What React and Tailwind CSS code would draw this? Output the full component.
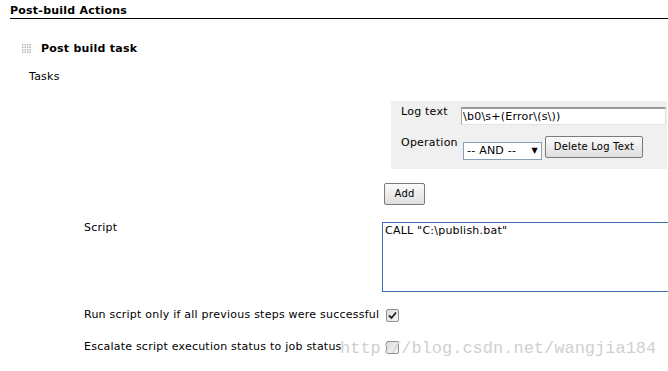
import React from "react";

const GripIcon = () => (
  <svg width="10" height="10" viewBox="0 0 10 10" className="shrink-0">
    {[0, 1, 2, 3].map((r) =>
      [0, 1, 2, 3].map((c) => (
        <rect key={`${r}-${c}`} x={c * 2.5} y={r * 2.5} width="1.5" height="1.5" fill="#b5b5b5" />
      ))
    )}
  </svg>
);

const Checkbox = ({ checked }) => (
  <span className="w-[13px] h-[13px] border border-[#8f8f8f] rounded-[2px] bg-gradient-to-br from-[#dcdcdc] to-[#f6f6f6] flex items-center justify-center shrink-0">
    {checked && (
      <svg width="9" height="9" viewBox="0 0 9 9">
        <path d="M1 4.5 L3.5 7 L8 1.5" stroke="#222" strokeWidth="1.8" fill="none" />
      </svg>
    )}
  </span>
);

const Button = ({ children, className = "" }) => (
  <button
    className={`h-[22px] border border-[#7a7a7a] rounded-[2px] bg-gradient-to-b from-[#fbfbfb] to-[#dedede] text-[10px] text-black leading-none tracking-[0.2px] whitespace-nowrap ${className}`}
  >
    {children}
  </button>
);

export default function App() {
  return (
    <div className="relative w-[668px] h-[371px] bg-white overflow-hidden text-[11px] text-black tracking-[0.23px]" style={{ fontFamily: '"DejaVu Sans", Verdana, sans-serif' }}>
      <div className="ml-[10px] pt-[4px] border-b border-black leading-[14px] font-bold">Post-build Actions</div>

      <div className="mt-[23px] ml-[22px] flex items-center gap-[9px] h-[14px]">
        <GripIcon />
        <span className="font-bold">Post build task</span>
      </div>

      <div className="mt-[14px] ml-[29px] leading-[14px]">Tasks</div>

      <div className="ml-[391px] mt-[17px] w-[276px] bg-[#f0f0f0] pt-[4px] pb-[9px] pl-[10px] pr-[1px]">
        <div className="flex items-start">
          <span className="w-[60px] leading-[14px]">Log text</span>
          <input
            readOnly
            value="\b0\s+(Error\(s\))"
            className="mt-[2px] flex-1 h-[18px] bg-white border-t-2 border-l border-t-[#9a9a9a] border-l-[#a8a8a8] border-r border-b border-r-[#e2e2e2] border-b-[#e2e2e2] px-[1px] text-[11px] outline-none"
          />
        </div>
        <div className="flex items-start mt-[11px]">
          <span className="w-[62px] leading-[14px]">Operation</span>
          <div className="mt-[6px] w-[79px] h-[18px] bg-white border border-[#8a9fb8] flex items-center justify-between px-[3px]">
            <span>-- AND --</span>
            <span className="text-[8px]">▼</span>
          </div>
          <Button className="ml-[3px] w-[98px] px-0">Delete Log Text</Button>
        </div>
      </div>

      <div className="ml-[384px] mt-[14px]">
        <Button className="w-[41px] px-0">Add</Button>
      </div>

      <div className="mt-[17px] flex">
        <div className="w-[382px] shrink-0 pl-[84px] leading-[14px] -mt-[1px]">Script</div>
        <div className="w-[300px] shrink-0 h-[70px] border border-[#3f6fb3] px-[2px] pt-[1px] leading-[14px]">
          CALL "C:\publish.bat"
        </div>
      </div>

      <div className="mt-[16px] flex items-center h-[14px]">
        <div className="w-[386px] shrink-0 pl-[84px] whitespace-nowrap">Run script only if all previous steps were successful</div>
        <Checkbox checked />
      </div>

      <div className="mt-[18px] flex items-center h-[14px]">
        <div className="w-[386px] shrink-0 pl-[84px] whitespace-nowrap">Escalate script execution status to job status</div>
        <Checkbox />
      </div>

      <div
        className="absolute left-[340px] top-[338px] text-[17px] leading-[22px] text-[#d0d0d0] tracking-normal pointer-events-none whitespace-nowrap"
        style={{ fontFamily: '"Liberation Mono", monospace' }}
      >
        http://blog.csdn.net/wangjia184
      </div>
    </div>
  );
}
